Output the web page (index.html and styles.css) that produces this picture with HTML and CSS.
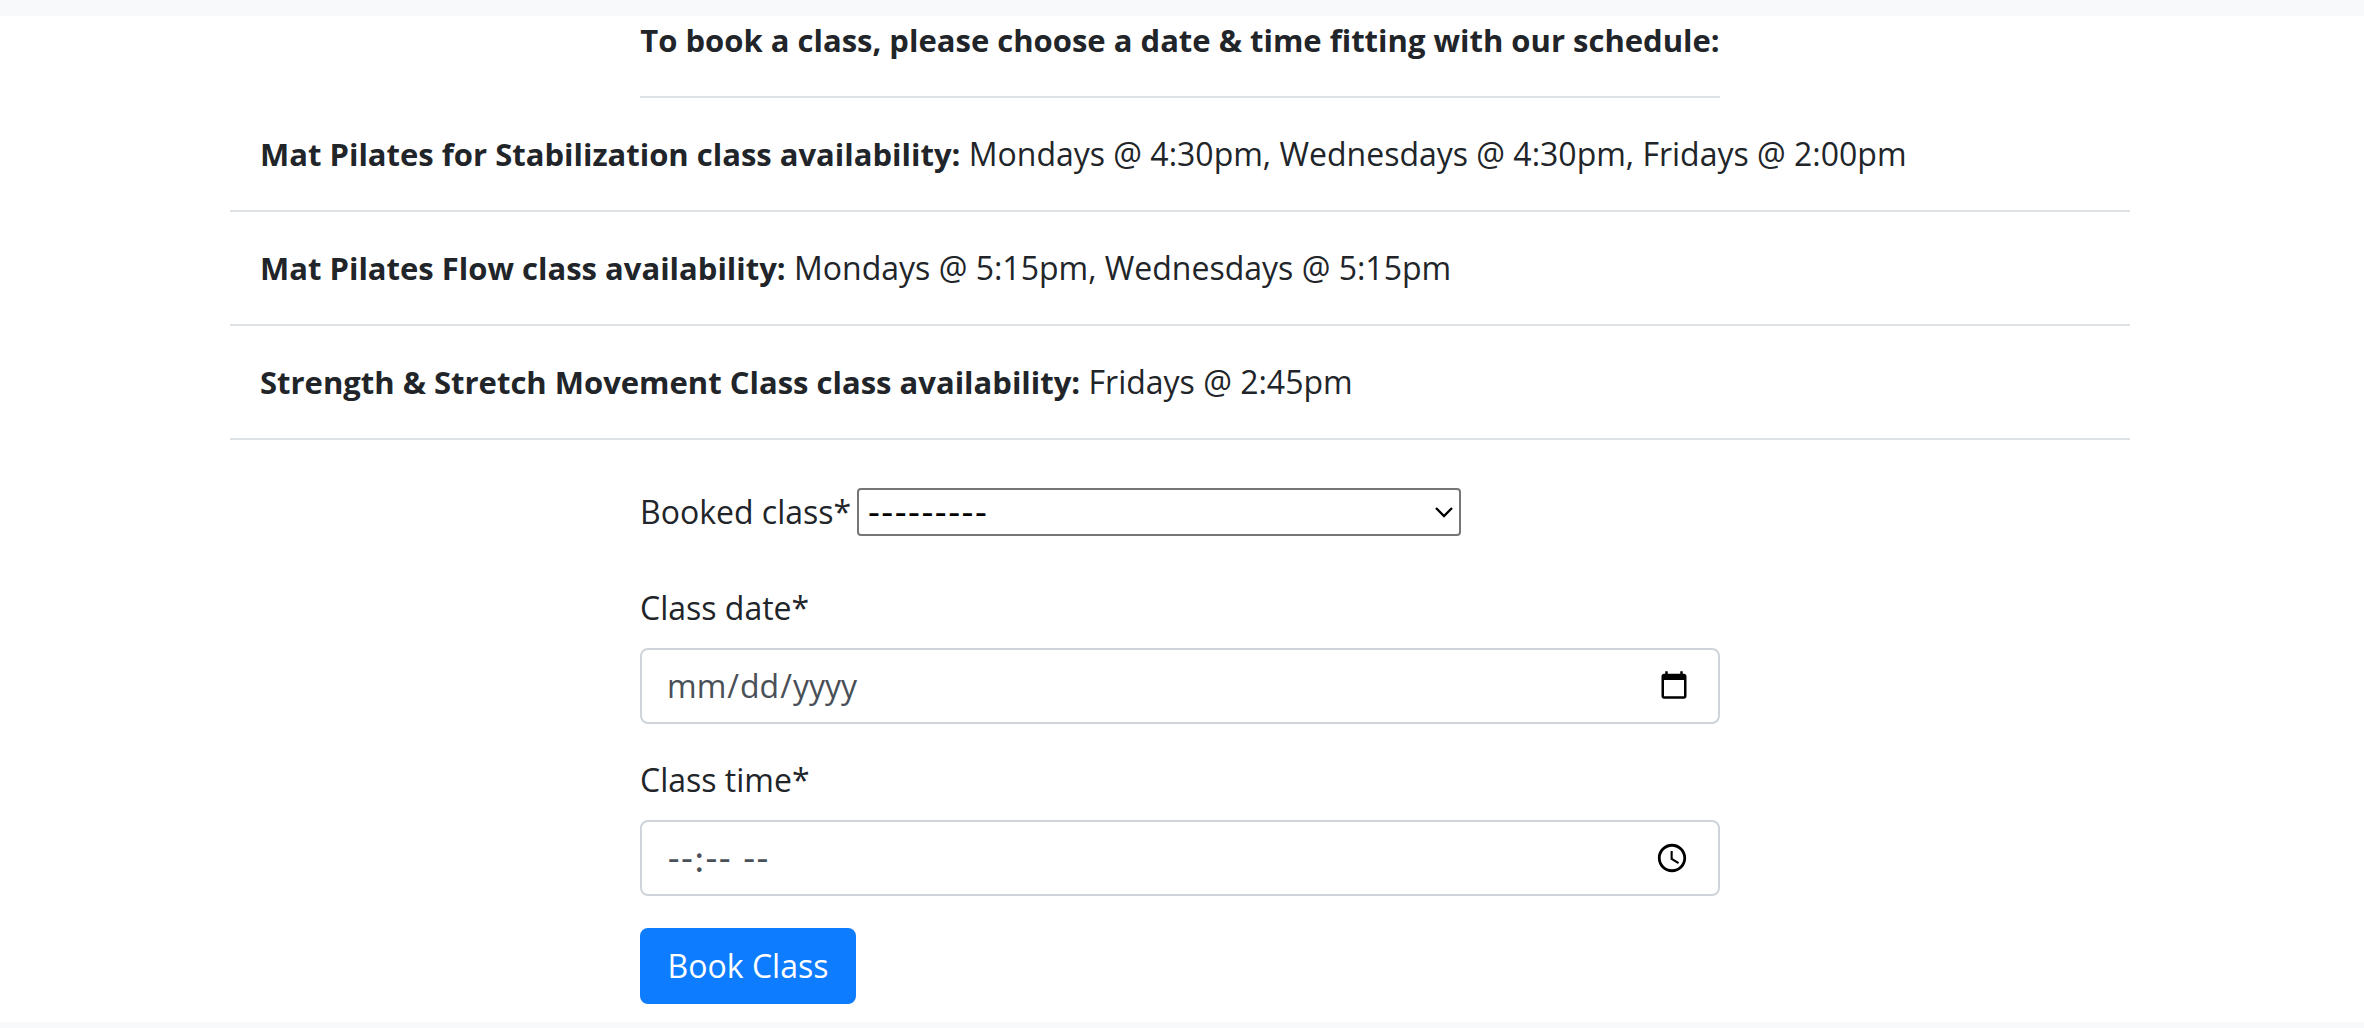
FILE: index.html
```html
<!DOCTYPE html>
<html lang="en">
<head>
  <meta charset="utf-8">
  <meta name="viewport" content="width=device-width, initial-scale=1">
  <title>Book a Class</title>
  <link rel="stylesheet" href="styles.css">
</head>
<body>
  <main class="booking">
    <h1 class="booking-title">To book a class, please choose a date &amp; time fitting with our schedule:</h1>
    <ul class="schedule">
      <li class="schedule-item"><strong>Mat Pilates for Stabilization class availability:</strong> Mondays @ 4:30pm, Wednesdays @ 4:30pm, Fridays @ 2:00pm</li>
      <li class="schedule-item"><strong>Mat Pilates Flow class availability:</strong> Mondays @ 5:15pm, Wednesdays @ 5:15pm</li>
      <li class="schedule-item"><strong>Strength &amp; Stretch Movement Class class availability:</strong> Fridays @ 2:45pm</li>
    </ul>
    <form class="booking-form">
      <div class="field field-inline">
        <label for="booked-class">Booked class*</label>
        <select id="booked-class" class="class-select">
          <option value="">---------</option>
          <option>Mat Pilates for Stabilization</option>
          <option>Mat Pilates Flow</option>
          <option>Strength &amp; Stretch Movement Class</option>
        </select>
      </div>
      <div class="field">
        <label for="class-date">Class date*</label>
        <input id="class-date" class="form-control" type="date">
      </div>
      <div class="field">
        <label for="class-time">Class time*</label>
        <input id="class-time" class="form-control form-control-time" type="time">
      </div>
      <button class="submit" type="submit">Book Class</button>
    </form>
  </main>
</body>
</html>
```
FILE: styles.css
```css
* {
  box-sizing: border-box;
}

body {
  margin: 0;
  padding: 16px 0;
  background: #f8f9fb;
  color: #212529;
  font-family: "Open Sans", sans-serif;
  font-size: 32px;
  line-height: 48px;
}

.booking {
  display: flex;
  flex-direction: column;
  align-items: center;
  padding: 0 4px 18px 0;
  background: #fff;
}

.booking-title {
  margin: 0;
  padding-bottom: 32px;
  border-bottom: 2px solid #dee2e6;
  font-size: 31px;
  font-weight: 700;
}

.schedule {
  width: 100%;
  max-width: 1900px;
  margin: 0 0 48px;
  padding: 0;
  list-style: none;
}

.schedule-item {
  padding: 32px 30px;
  border-bottom: 2px solid #dee2e6;
}

.schedule-item strong {
  font-size: 31px;
  font-weight: 700;
}

.booking-form {
  width: 100%;
  max-width: 1080px;
}

.field {
  display: flex;
  flex-direction: column;
  gap: 16px;
  margin-bottom: 32px;
}

.field-inline {
  flex-direction: row;
  align-items: center;
  gap: 6px;
  margin-bottom: 48px;
}

.class-select {
  appearance: none;
  width: 604px;
  height: 48px;
  padding: 0 32px 0 8px;
  border: 2px solid #767676;
  border-radius: 4px;
  background: #fff url("data:image/svg+xml,%3Csvg xmlns='http://www.w3.org/2000/svg' width='18' height='12' viewBox='0 0 18 12'%3E%3Cpath d='M1 2l8 8 8-8' fill='none' stroke='%23000' stroke-width='2.3'/%3E%3C/svg%3E") no-repeat right 6px center;
  color: #000;
  font-family: Lato, sans-serif;
  font-size: 36px;
  line-height: 44px;
}

.form-control {
  width: 100%;
  height: 76px;
  padding: 12px 26px 12px 24px;
  border: 2px solid #ced4da;
  border-radius: 8px;
  background: #fff;
  color: #495057;
  font: inherit;
}

.form-control-time {
  font-family: Lato, sans-serif;
  font-size: 36px;
}

.form-control::-webkit-calendar-picker-indicator {
  font-size: 32px;
}

.submit {
  display: block;
  min-width: 216px;
  padding: 12px 24px;
  border: 2px solid #0d7cff;
  border-radius: 8px;
  background: #0d7cff;
  color: #fff;
  font: inherit;
}
```
